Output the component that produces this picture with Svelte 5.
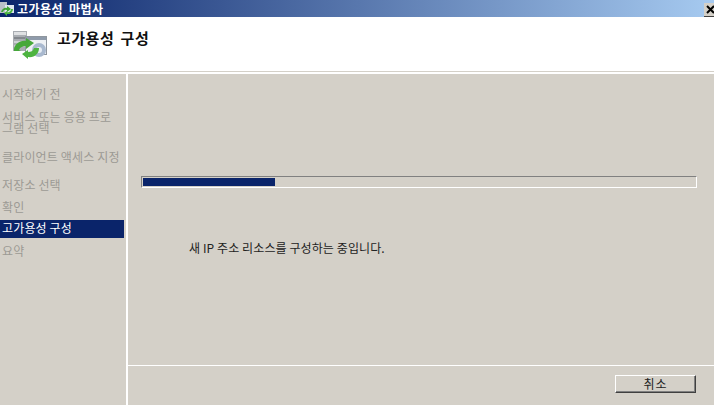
<script>
  const steps = [
    { label: '시작하기 전', cls: 'h22' },
    { label: '서비스 또는 응용 프로\n그램 선택', cls: 'h39' },
    { label: '클라이언트 액세스 지정', cls: 'h28' },
    { label: '저장소 선택', cls: 'h22' },
    { label: '확인', cls: 'h22' },
    { label: '고가용성 구성', cls: 'h18 active' },
    { label: '요약', cls: 'h22' }
  ];
</script>

<div class="win">
  <div class="titlebar">
    <svg class="ticon" width="16" height="16" viewBox="0 0 16 16">
      <rect x="0" y="1" width="7" height="11" fill="#b9c0c8"/>
      <rect x="5" y="4" width="9" height="8" fill="#dfe7ef"/>
      <path d="M1 11a5 5 0 0 1 6-4l0-2 4 3-4 3 0-2a3 3 0 0 0-4 2z" fill="#3fa535"/>
      <path d="M13 8a5 5 0 0 1-6 5l0 2-3-3 3-2 0 1a3 3 0 0 0 4-3z" fill="#4cb53f"/>
    </svg>
    <span class="ttext">고가용성 마법사</span>
    <span class="close">
      <svg width="9" height="9" viewBox="0 0 9 9"><path d="M1 1l7 7M8 1l-7 7" stroke="#000" stroke-width="2"/></svg>
    </span>
  </div>

  <header class="head">
    <svg class="hicon" width="35" height="28" viewBox="0 0 35 28">
      <rect x="0" y="0" width="14" height="20" fill="#a9adb2"/>
      <rect x="1" y="1" width="12" height="3" fill="#dfe1e3"/>
      <rect x="1" y="6" width="12" height="2" fill="#83888d"/>
      <rect x="1" y="10" width="12" height="2" fill="#cfd2d5"/>
      <rect x="1" y="14" width="12" height="2" fill="#c2c6ca"/>
      <rect x="12.5" y="5.5" width="21" height="18" fill="#eef1f4" stroke="#8f969e"/>
      <rect x="13" y="6" width="20" height="3" fill="#8f9bab"/>
      <circle cx="26" cy="19" r="7" fill="#a9b9cf"/>
      <circle cx="26" cy="19" r="3" fill="#e7edf4"/>
      <path d="M1 18c1-5 6-9 12-8l0-3 8 5-8 6 0-3c-3 0-6 1-7 4l2 1H1z" fill="#46a83a"/>
      <path d="M26 17c0 6-5 10-11 9l0 2-6-5 6-4 0 2c3 0 5-1 6-4z" fill="#4db440"/>
    </svg>
    <h1>고가용성 구성</h1>
  </header>

  <div class="body">
    <nav class="side">
      {#each steps as s}
        <div class="step {s.cls}">{s.label}</div>
      {/each}
    </nav>
    <main class="main">
      <section class="content">
        <div class="track"><div class="fill"></div></div>
        <p class="msg">새 IP 주소 리소스를 구성하는 중입니다.</p>
      </section>
      <footer class="foot">
        <button class="btn">취소</button>
      </footer>
    </main>
  </div>
</div>

<style>
  :global(body) { margin: 0; background: #d4d0c8; }
  .win {
    width: 714px; height: 405px; overflow: hidden;
    display: flex; flex-direction: column;
    background: #d4d0c8;
    font-family: "Noto Sans CJK KR", "Liberation Sans", sans-serif;
    font-size: 12px; color: #1c1c1c;
  }
  .titlebar {
    height: 17px; flex: none; box-sizing: border-box;
    display: flex; align-items: center;
    background: linear-gradient(90deg, #0a246a 0%, #a6caf0 100%);
    color: #fff;
  }
  .ticon { flex: none; }
  .ttext { margin-left: 1px; font-weight: 700; font-size: 12px; letter-spacing: 0.5px; word-spacing: 2.5px; line-height: 15px; }
  .close {
    margin-left: auto; width: 10px; height: 14px; margin-top: 2px;
    background: #d4d0c8; border-bottom: 1px solid #404040; box-sizing: border-box;
    display: flex; align-items: center; padding-left: 2px; overflow: hidden;
  }
  .close svg { flex: none; }
  .head {
    height: 54px; flex: none; background: #fff;
    display: flex; align-items: flex-start;
    border-bottom: 1px solid #d4d0c8;
  }
  .hicon { margin: 14px 0 0 13px; flex: none; }
  h1 {
    margin: 11px 0 0 9px; font-size: 15px; font-weight: 700; line-height: 20px;
    letter-spacing: 0.5px; word-spacing: 2.5px; color: #111;
  }
  .body { flex: 1; display: flex; min-height: 0; border-top: 2px solid #fff; }
  .side {
    width: 126px; flex: none; box-sizing: border-box; padding-top: 14px;
    display: flex; flex-direction: column;
  }
  .step {
    padding-left: 2px; color: #9c9a94; line-height: 11px;
    white-space: pre-line; font-size: 12px; letter-spacing: 0.15px;
    width: 124px; box-sizing: border-box;
  }
  .h22 { height: 22px; }
  .h39 { height: 39px; margin-top: 1px; }
  .h28 { height: 28px; margin-top: 1px; }
  .active {
    height: 18px; background: #0a246a; color: #fff; line-height: 16px;
    margin-top: -3px; margin-bottom: 7px;
  }
  .main {
    flex: 1; display: flex; flex-direction: column; min-width: 0;
    border-left: 2px solid #fff;
  }
  .content { flex: 1; padding: 102px 17px 0 13px; }
  .track {
    height: 12px; box-sizing: border-box;
    border: 1px solid; border-color: #808080 #fff #fff #808080;
    padding: 1px;
  }
  .fill { width: 24%; height: 100%; background: #0a246a; }
  .msg { margin: 52px 0 0 48px; font-size: 12px; letter-spacing: 0.1px; line-height: 16px; color: #222; }
  .foot {
    height: 40px; flex: none; box-sizing: border-box;
    border-top: 1px solid #fff;
    display: flex; justify-content: flex-end; align-items: flex-start;
    padding: 9px 18px 0 0;
  }
  .btn {
    width: 81px; height: 18px; padding: 0; box-sizing: border-box;
    background: #d4d0c8; color: #222;
    border: 1px solid; border-color: #fff #404040 #404040 #fff;
    box-shadow: inset -1px -1px 0 #808080;
    font: inherit; line-height: 14px; letter-spacing: 1px;
  }
</style>
